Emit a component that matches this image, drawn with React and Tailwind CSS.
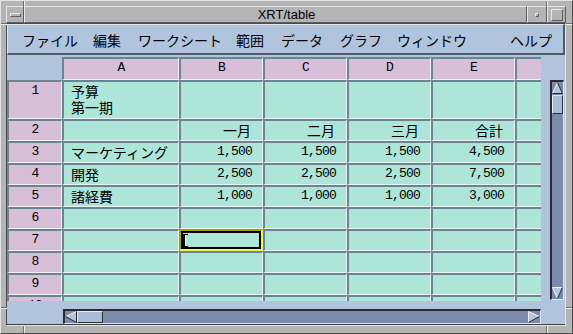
import React from "react";

const rows = [
  { label: "1", a: ["予算", "第一期"], vals: ["", "", "", ""] },
  { label: "2", a: [], vals: ["一月", "二月", "三月", "合計"] },
  { label: "3", a: ["マーケティング"], vals: ["1,500", "1,500", "1,500", "4,500"] },
  { label: "4", a: ["開発"], vals: ["2,500", "2,500", "2,500", "7,500"] },
  { label: "5", a: ["諸経費"], vals: ["1,000", "1,000", "1,000", "3,000"] },
  { label: "6", a: [], vals: ["", "", "", ""] },
  { label: "7", a: [], vals: ["", "", "", ""] },
  { label: "8", a: [], vals: ["", "", "", ""] },
  { label: "9", a: [], vals: ["", "", "", ""] },
  { label: "10", a: [], vals: ["", "", "", ""] },
];

const HEAD =
  "bg-[#d8bfd8] border-t-2 border-l-2 border-b border-r border-t-[#6b8494] border-l-[#6b8494] border-b-[#f6eef6] border-r-[#f6eef6] overflow-hidden";
const CELL =
  "bg-[#ade6d8] border-t-2 border-l-2 border-b border-r border-t-[#6b8494] border-l-[#6b8494] border-b-[#e6f7f3] border-r-[#e6f7f3] overflow-hidden";
const MONO = "font-['Liberation_Mono',monospace] text-[13px] tracking-[-0.8px] leading-[16px]";
const CJK = "font-['Noto_Sans_CJK_JP',sans-serif] text-[14px] leading-[16px]";

const RAISED =
  "border-t border-l border-b border-r border-t-[#e8e8e8] border-l-[#e8e8e8] border-b-[#5e5e5e] border-r-[#5e5e5e]";

function UpArrow() {
  return (
    <svg width="11" height="12" className="block shrink-0">
      <polygon points="5.5,0.5 0.5,11.5 10.5,11.5" fill="#b3c4dc" />
      <line x1="5.5" y1="0.5" x2="0.5" y2="11.5" stroke="#eef2f7" />
      <line x1="5.5" y1="0.5" x2="10.5" y2="11.5" stroke="#262626" />
      <line x1="0.5" y1="11.5" x2="10.5" y2="11.5" stroke="#262626" />
    </svg>
  );
}
function DownArrow() {
  return (
    <svg width="11" height="12" className="block shrink-0">
      <polygon points="0.5,0.5 10.5,0.5 5.5,11.5" fill="#b3c4dc" />
      <line x1="0.5" y1="0.5" x2="10.5" y2="0.5" stroke="#eef2f7" />
      <line x1="0.5" y1="0.5" x2="5.5" y2="11.5" stroke="#eef2f7" />
      <line x1="10.5" y1="0.5" x2="5.5" y2="11.5" stroke="#262626" />
    </svg>
  );
}
function LeftArrow() {
  return (
    <svg width="12" height="12" className="block shrink-0">
      <polygon points="0.5,5.5 11.5,0.5 11.5,11.5" fill="#b3c4dc" />
      <line x1="0.5" y1="5.5" x2="11.5" y2="0.5" stroke="#eef2f7" />
      <line x1="0.5" y1="5.5" x2="11.5" y2="11.5" stroke="#262626" />
      <line x1="11.5" y1="0.5" x2="11.5" y2="11.5" stroke="#262626" />
    </svg>
  );
}
function RightArrow() {
  return (
    <svg width="12" height="12" className="block shrink-0">
      <polygon points="0.5,0.5 11.5,5.5 0.5,11.5" fill="#b3c4dc" />
      <line x1="0.5" y1="0.5" x2="0.5" y2="11.5" stroke="#eef2f7" />
      <line x1="0.5" y1="0.5" x2="11.5" y2="5.5" stroke="#eef2f7" />
      <line x1="0.5" y1="11.5" x2="11.5" y2="5.5" stroke="#262626" />
    </svg>
  );
}

function Caret() {
  return (
    <svg width="6" height="13" className="block shrink-0">
      <rect x="0" y="0" width="2" height="13" fill="#000" />
      <rect x="0" y="0" width="5" height="1" fill="#000" />
      <rect x="0" y="12" width="5" height="1" fill="#000" />
      <rect x="2" y="1" width="1" height="11" fill="#f4fbf9" />
    </svg>
  );
}

function ValueCell({ v, selected }) {
  if (selected) {
    return (
      <div className="border-2 border-t-[#a39e00] border-l-[#a39e00] border-b-[#f2f25a] border-r-[#f2f25a] bg-[#ade6d8]">
        <div className="h-full border-2 border-black flex items-center">
          <Caret />
        </div>
      </div>
    );
  }
  const isNum = /[0-9]/.test(v);
  return (
    <div className={CELL}>
      {v ? (
        isNum ? (
          <div className={MONO + " text-right pr-[10px] pt-[1px] text-black"}>{v}</div>
        ) : (
          <div className={CJK + " text-right pr-[11px] pt-[1px] text-black"}>{v}</div>
        )
      ) : null}
    </div>
  );
}

function Table() {
  return (
    <div className="w-[534px] h-[244px] overflow-hidden shrink-0">
      <div className="grid grid-cols-[55px_117px_84px_84px_84px_84px_84px] grid-rows-[23px_39px_repeat(9,22px)] w-[592px]">
        <div />
        {["A", "B", "C", "D", "E", "F"].map((c) => (
          <div key={c} className={HEAD}>
            <div className={MONO + " text-center pt-[1px] text-black"}>{c === "F" ? "" : c}</div>
          </div>
        ))}
        {rows.map((r) => (
          <React.Fragment key={r.label}>
            <div className={HEAD}>
              <div className={MONO + " text-center pt-[1px] text-black"}>{r.label}</div>
            </div>
            <div className={CELL}>
              <div className={CJK + " pl-[7px] pt-[1px] text-black"}>
                {r.a.map((t) => (
                  <div key={t}>{t}</div>
                ))}
              </div>
            </div>
            {r.vals.map((v, i) => (
              <ValueCell key={i} v={v} selected={r.label === "7" && i === 0} />
            ))}
            <div className={CELL} />
          </React.Fragment>
        ))}
      </div>
    </div>
  );
}

export default function App() {
  return (
    <div className="relative w-[573px] h-[334px] bg-[#b4b4b4] border border-t-[#e4e4e4] border-l-[#e4e4e4] border-b-[#4e4e4e] border-r-[#4e4e4e] pt-[5px] pl-[5px] pr-[6px] pb-[7px] flex flex-col font-['Liberation_Sans',sans-serif] overflow-hidden">
      {/* resize corner marks */}
      <span className="absolute left-[22px] top-[-1px] h-[7px] w-[2px] border-l border-r border-l-[#6e6e6e] border-r-[#f0f0f0]" />
      <span className="absolute left-[545px] top-[-1px] h-[7px] w-[2px] border-l border-r border-l-[#6e6e6e] border-r-[#f0f0f0]" />
      <span className="absolute left-[22px] top-[325px] h-[9px] w-[2px] border-l border-r border-l-[#6e6e6e] border-r-[#f0f0f0]" />
      <span className="absolute left-[545px] top-[325px] h-[9px] w-[2px] border-l border-r border-l-[#6e6e6e] border-r-[#f0f0f0]" />
      <span className="absolute left-[-1px] top-[22px] w-[7px] h-[2px] border-t border-b border-t-[#6e6e6e] border-b-[#f0f0f0]" />
      <span className="absolute left-[-1px] top-[306px] w-[7px] h-[2px] border-t border-b border-t-[#6e6e6e] border-b-[#f0f0f0]" />
      <span className="absolute left-[565px] top-[22px] w-[8px] h-[2px] border-t border-b border-t-[#6e6e6e] border-b-[#f0f0f0]" />
      <span className="absolute left-[565px] top-[306px] w-[8px] h-[2px] border-t border-b border-t-[#6e6e6e] border-b-[#f0f0f0]" />

      {/* title bar */}
      <div className="h-[17px] shrink-0 flex">
        <div className={"w-[18px] flex items-center justify-center " + RAISED}>
          <div className={"w-[11px] h-[4px] " + RAISED} />
        </div>
        <div className={"flex-1 flex items-center justify-center pl-[22px] text-[13px] leading-[15px] text-black " + RAISED}>
          XRT/table
        </div>
        <div className={"w-[20px] flex items-center justify-center " + RAISED}>
          <div className={"w-[4px] h-[4px] " + RAISED} />
        </div>
        <div className={"w-[19px] flex items-center justify-center " + RAISED}>
          <div className={"w-[12px] h-[12px] " + RAISED} />
        </div>
      </div>

      {/* client area */}
      <div className="flex-1 flex flex-col bg-[#b0c4de] border border-t-[#4a4a4a] border-l-[#4a4a4a] border-b-[#e6e6e6] border-r-[#e6e6e6]">
        {/* menu bar */}
        <div className={"h-[31px] shrink-0 flex items-center pt-[1px] pl-[14px] pr-[11px] text-black border-t border-l border-b-2 border-r-2 border-t-[#dde6f1] border-l-[#dde6f1] border-b-[#4e5866] border-r-[#4e5866] " + CJK}>
          <span>ファイル</span>
          <span className="ml-[15px]">編集</span>
          <span className="ml-[17px]">ワークシート</span>
          <span className="ml-[14px]">範囲</span>
          <span className="ml-[17px]">データ</span>
          <span className="ml-[17px]">グラフ</span>
          <span className="ml-[15px]">ウィンドウ</span>
          <span className="ml-auto">ヘルプ</span>
        </div>

        {/* work area */}
        <div className="flex-1 flex flex-col pt-[2px] border-b border-b-[#3c3c3c]">
          <div className="flex">
            <Table />
            <div className="ml-[9px] mt-[23px] w-[14px] h-[220px] shrink-0 bg-[#7b8bab] border-t-2 border-l-2 border-b border-r border-t-[#2c2c2c] border-l-[#2c2c2c] border-b-[#dfe6ef] border-r-[#dfe6ef] flex flex-col">
              <UpArrow />
              <div className="mt-[1px] h-[19px] bg-[#aabdd8] border-t border-l border-b border-r border-t-[#e2e9f2] border-l-[#e2e9f2] border-b-[#2e2e2e] border-r-[#2e2e2e]" />
              <div className="flex-1" />
              <DownArrow />
            </div>
          </div>
          <div className="ml-[56px] mt-[8px] w-[478px] h-[15px] shrink-0 bg-[#7b8bab] border-t-2 border-l-2 border-b border-r border-t-[#2c2c2c] border-l-[#2c2c2c] border-b-[#dfe6ef] border-r-[#dfe6ef] flex">
            <LeftArrow />
            <div className="w-[26px] bg-[#aabdd8] border-t border-l border-b border-r border-t-[#e2e9f2] border-l-[#e2e9f2] border-b-[#2e2e2e] border-r-[#2e2e2e]" />
            <div className="flex-1" />
            <RightArrow />
          </div>
        </div>
      </div>
    </div>
  );
}
